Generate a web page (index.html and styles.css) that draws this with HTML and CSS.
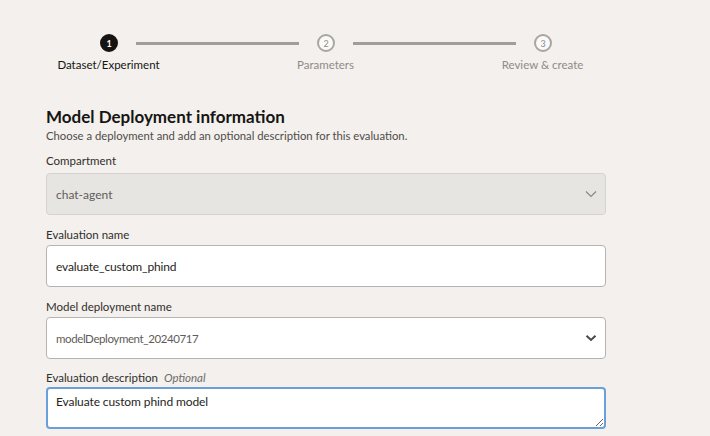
FILE: index.html
```html
<!DOCTYPE html>
<html lang="en">
<head>
<meta charset="utf-8">
<link rel="stylesheet" href="styles.css">
</head>
<body>
<div class="stepper">
  <div class="track">
    <span class="dot dot-active">1</span>
    <span class="line"></span>
    <span class="dot">2</span>
    <span class="line"></span>
    <span class="dot">3</span>
  </div>
  <div class="labels">
    <span class="step-label active">Dataset/Experiment</span>
    <span class="step-label">Parameters</span>
    <span class="step-label">Review &amp; create</span>
  </div>
</div>

<form class="form">
  <h2 class="title">Model Deployment information</h2>
  <p class="subtitle">Choose a deployment and add an optional description for this evaluation.</p>

  <div class="field field-first">
    <label class="label">Compartment</label>
    <div class="control disabled">
      <span class="value">chat-agent</span>
      <svg class="chev" width="12" height="8" viewBox="0 0 12 8"><path d="M1 1.5 L6 6.5 L11 1.5" fill="none" stroke="#8a8783" stroke-width="1.2"/></svg>
    </div>
  </div>

  <div class="field">
    <label class="label">Evaluation name</label>
    <div class="control">
      <span class="value">evaluate_custom_phind</span>
    </div>
  </div>

  <div class="field">
    <label class="label">Model deployment name</label>
    <div class="control">
      <span class="value muted">modelDeployment_20240717</span>
      <svg class="chev" width="12" height="8" viewBox="0 0 12 8"><path d="M1.5 1.8 L6 6 L10.5 1.8" fill="none" stroke="#4a4744" stroke-width="2"/></svg>
    </div>
  </div>

  <div class="field field-last">
    <label class="label">Evaluation description <em class="opt">Optional</em></label>
    <textarea class="area">Evaluate custom phind model</textarea>
  </div>
</form>
</body>
</html>
```

FILE: styles.css
```css
html, body {
  margin: 0;
  padding: 0;
  background: #f3f0ed;
  font-family: Lato, "Open Sans", sans-serif;
  color: #161513;
}

.stepper {
  padding-top: 34px;
}

.track {
  display: flex;
  align-items: center;
  margin-left: 100px;
  height: 18px;
}

.dot {
  width: 18px;
  height: 18px;
  box-sizing: border-box;
  border-radius: 50%;
  border: 2px solid #a9a5a1;
  background: #fbfaf9;
  color: #8f8b87;
  font-size: 9px;
  display: flex;
  align-items: center;
  justify-content: center;
  flex: none;
}

.dot-active {
  background: #161513;
  border-color: #161513;
  color: #fff;
  font-weight: 700;
}

.line {
  width: 163px;
  height: 3px;
  margin: 0 18px;
  background: #a19d99;
  flex: none;
}

.labels {
  display: grid;
  grid-template-columns: repeat(3, 217px);
  margin-top: 5px;
}

.step-label {
  text-align: center;
  font-size: 11.5px;
  line-height: 16px;
  color: #8f8b87;
}

.step-label.active {
  color: #161513;
}

.form {
  margin: 34px 0 0 46px;
  width: 560px;
}

.title {
  margin: 0;
  font-size: 17px;
  line-height: 20px;
  font-weight: 700;
}

.subtitle {
  margin: 2px 0 0;
  font-size: 11.3px;
  line-height: 14px;
  color: #4f4c49;
}

.field {
  margin-top: 12px;
}

.field-first {
  margin-top: 10px;
}

.label {
  display: block;
  font-size: 11.5px;
  line-height: 16px;
  color: #312e2b;
  margin-bottom: 2px;
}

.field-first .label {
  margin-bottom: 4px;
}

.field-last {
  margin-top: 11px;
}

.field-last .label {
  margin-bottom: 1px;
}

.opt {
  font-style: italic;
  color: #6f6c69;
  margin-left: 3px;
}

.control {
  height: 42px;
  box-sizing: border-box;
  border: 1px solid #b6b3b0;
  border-radius: 4px;
  background: #fff;
  display: flex;
  align-items: center;
  justify-content: space-between;
  padding: 0 8px 0 9px;
}

.control.disabled {
  background: #e7e5e2;
  border-color: #d6d3cf;
}

.value {
  font-size: 12px;
  letter-spacing: -0.15px;
  color: #262421;
}

.control.disabled .value {
  letter-spacing: 0;
  color: #5f5c59;
}

.value.muted {
  font-size: 11.5px;
  letter-spacing: -0.4px;
  color: #5f5c59;
}

.chev {
  display: block;
}

.area {
  display: block;
  width: 560px;
  height: 42px;
  box-sizing: border-box;
  margin: 0;
  border: 2px solid #6b9fd9;
  border-radius: 4px;
  background: #fff;
  padding: 5px 8px;
  font-family: Lato, "Open Sans", sans-serif;
  font-size: 12px;
  letter-spacing: -0.1px;
  line-height: 16px;
  color: #262421;
  resize: vertical;
  outline: none;
}
```
